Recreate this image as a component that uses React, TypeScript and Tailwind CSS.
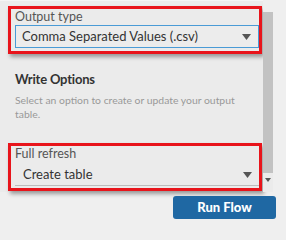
import React from "react";

const Caret = () => (
  <svg width="9" height="6" viewBox="0 0 9 6" className="shrink-0">
    <path d="M0 0h9L4.5 6z" fill="#555" />
  </svg>
);

const App = () => {
  return (
    <div className="w-[286px] h-[240px] flex flex-col bg-[#efefef] font-['Lato',sans-serif] overflow-hidden">
      <div className="flex h-[192px]">
        <div className="w-[263px] bg-[#ebebeb] border-t border-[#f4f4f4] pt-[5px] pl-[8px] pr-px">
          <div className="border-[3px] border-[#e8141b] shadow-[2px_3px_4px_rgba(0,0,0,0.35)] pb-[3px]">
            <div className="pl-[4px] text-[12.5px] leading-[16px] text-[#555]">Output type</div>
            <div className="ml-[4px] h-[23px] border border-[#4a9bd6] bg-[#ececec] flex items-center justify-between pl-[6px] pr-[7px]">
              <span className="text-[13px] text-[#333]">Comma Separated Values (.csv)</span>
              <Caret />
            </div>
          </div>

          <h2 className="mt-[16px] pl-[7px] text-[13px] font-bold leading-[18px] text-[#333] tracking-[-0.2px]">Write Options</h2>
          <p className="mt-[5px] pl-[7px] pr-3 text-[10.4px] leading-[14px] text-[#999]">
            Select an option to create or update your output table.
          </p>

          <div className="mt-[22px] border-[3px] border-[#e8141b] shadow-[2px_3px_4px_rgba(0,0,0,0.35)] pb-[2px]">
            <div className="pl-[4px] text-[12.5px] leading-[16px] text-[#555]">Full refresh</div>
            <div className="ml-[4px] h-[24px] border-b border-[#bdbdbd] flex items-center justify-between pl-[8px] pr-[7px] pt-[2px]">
              <span className="text-[13px] text-[#333]">Create table</span>
              <Caret />
            </div>
          </div>
        </div>
        <div className="w-[10px] flex flex-col bg-[#ebebeb]">
          <div className="h-[12px] bg-[#efefef]" />
          <div className="h-[161px] bg-[#c2c2c2]" />
          <div className="h-[14px] flex items-center justify-center">
            <svg width="6" height="4" viewBox="0 0 6 4">
              <path d="M0 0h6L3 4z" fill="#555" />
            </svg>
          </div>
        </div>
      </div>
      <div className="flex justify-end pr-[10px] pt-[4px]">
        <button className="w-[103px] h-[23px] rounded-[3px] bg-[#1f68a3] text-white text-[13px] font-black leading-none">
          Run Flow
        </button>
      </div>
    </div>
  );
};

export default App;
